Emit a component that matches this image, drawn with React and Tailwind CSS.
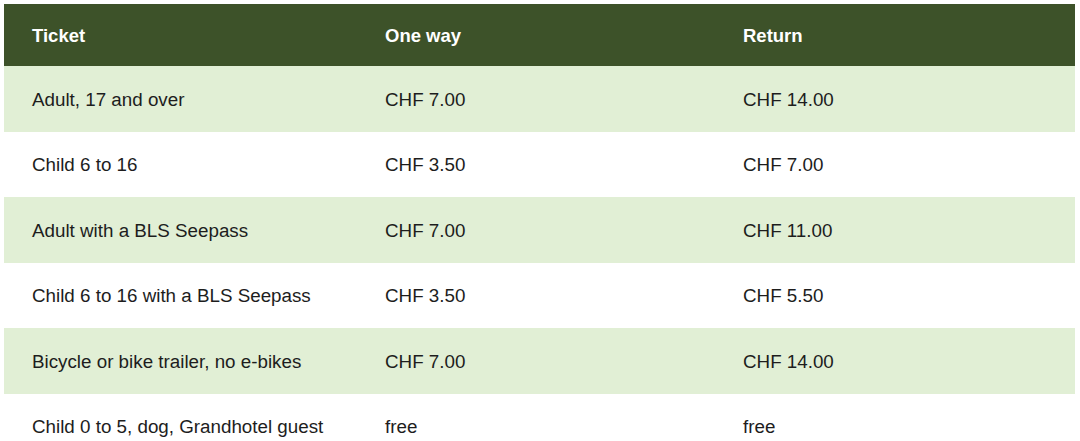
const rows = [
  ["Adult, 17 and over", "CHF 7.00", "CHF 14.00"],
  ["Child 6 to 16", "CHF 3.50", "CHF 7.00"],
  ["Adult with a BLS Seepass", "CHF 7.00", "CHF 11.00"],
  ["Child 6 to 16 with a BLS Seepass", "CHF 3.50", "CHF 5.50"],
  ["Bicycle or bike trailer, no e-bikes", "CHF 7.00", "CHF 14.00"],
  ["Child 0 to 5, dog, Grandhotel guest", "free", "free"],
];

export default function App() {
  return (
    <div className="w-[1080px] h-[441px] overflow-hidden bg-white px-[4px] pt-[4px] font-['Liberation_Sans',Arial,sans-serif]">
      <table className="w-[1071px] border-collapse table-fixed">
        <colgroup>
          <col className="w-[353px]" />
          <col className="w-[358px]" />
          <col />
        </colgroup>
        <thead>
          <tr className="bg-[#3d5229] h-[62px] text-white text-left text-[18.5px] font-bold">
            <th className="pl-[28px] pt-[1px]">Ticket</th>
            <th className="pl-[28px] pt-[1px]">One way</th>
            <th className="pl-[28px] pt-[1px]">Return</th>
          </tr>
        </thead>
        <tbody>
          {rows.map((r, i) => (
            <tr
              key={i}
              className={
                (i % 2 === 0 ? "bg-[#e1efd5] " : "bg-white ") +
                "h-[65.5px] text-[18.8px] text-[#1d1d1d]"
              }
            >
              <td className="pl-[28px] pt-[2px]">{r[0]}</td>
              <td className="pl-[28px] pt-[2px]">{r[1]}</td>
              <td className="pl-[28px] pt-[2px]">{r[2]}</td>
            </tr>
          ))}
        </tbody>
      </table>
    </div>
  );
}
